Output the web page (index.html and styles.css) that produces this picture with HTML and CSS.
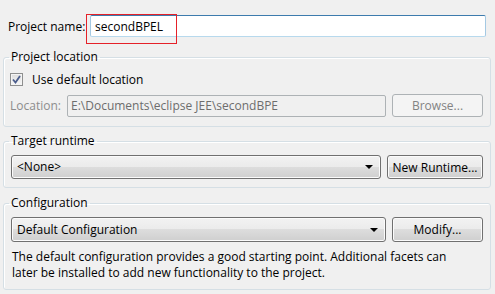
FILE: index.html
```html
<!doctype html>
<html>
  <head>
    <meta charset="utf-8">
    <link rel="stylesheet" href="styles.css">
  </head>
  <body>
    <div class="page">
      <div class="name-row">
        <label class="name-label" for="name">Project name:</label>
        <input id="name" class="name-input" type="text" value="secondBPEL">
        <span class="callout"></span>
      </div>

      <fieldset class="group group-location">
        <legend>Project location</legend>
        <label class="check-row">
          <span class="check">
            <svg width="9" height="9" viewBox="0 0 9 9"><path d="M1 4.5 L3.5 7.5 L8 1" fill="none" stroke="#4b5d8c" stroke-width="1.8"/></svg>
          </span>
          Use default location
        </label>
        <div class="row">
          <span class="loc-label">Location:</span>
          <span class="field field-disabled">E:\Documents\eclipse JEE\secondBPE</span>
          <button class="btn btn-small" disabled>Browse...</button>
        </div>
      </fieldset>

      <fieldset class="group group-runtime">
        <legend>Target runtime</legend>
        <div class="row">
          <span class="combo">&lt;None&gt;<span class="arrow"></span></span>
          <button class="btn btn-wide">New Runtime...</button>
        </div>
      </fieldset>

      <fieldset class="group group-config">
        <legend>Configuration</legend>
        <div class="row">
          <span class="combo combo-tall">Default Configuration<span class="arrow"></span></span>
          <button class="btn btn-small btn-tall">Modify...</button>
        </div>
        <p class="desc">The default configuration provides a good starting point. Additional facets can<br>later be installed to add new functionality to the project.</p>
      </fieldset>
    </div>
  </body>
</html>
```

FILE: styles.css
```css
body {
  margin: 0;
  background: #f0f0f0;
  font-family: "Open Sans", sans-serif;
  font-size: 12px;
  color: #000;
}
.page {
  padding-top: 15px;
}
.name-row {
  position: relative;
  display: flex;
  align-items: center;
  height: 22px;
}
.name-label {
  width: 82px;
  padding-left: 8px;
}
.name-input {
  box-sizing: border-box;
  width: 396px;
  height: 22px;
  margin: 0;
  padding: 0 0 0 4px;
  border: 1px solid;
  border-color: #3d7bad #a4c9e3 #b7d9ed #a4c9e3;
  border-radius: 2px;
  background: #fff;
  font-family: inherit;
  font-size: 12px;
  color: #000;
  outline: none;
}
.callout {
  position: absolute;
  left: 86px;
  top: -1px;
  width: 89px;
  height: 28px;
  border: 1px solid #e52129;
}
.group {
  margin: 12px 4px 0 3px;
  padding: 6px 7px 8px 7px;
  border: 1px solid #d5dfe5;
  border-radius: 3px;
  box-shadow: inset 1px 1px 0 #fff;
}
.group legend {
  padding: 0 2px;
  margin-left: -2px;
  line-height: 16px;
}
.group-location {
  padding-top: 6px;
  padding-bottom: 9px;
}
.group-runtime {
  margin-top: 6px;
}
.group-config {
  margin-top: 7px;
}
.check-row {
  display: flex;
  align-items: center;
  height: 16px;
  margin-left: -1px;
}
.check {
  box-sizing: border-box;
  display: flex;
  align-items: center;
  justify-content: center;
  width: 13px;
  height: 13px;
  margin-right: 9px;
  border: 1px solid #8e8f8f;
  background: linear-gradient(#dcdcdc, #f8f8f8);
  box-shadow: inset 0 0 0 1px #f4f4f4;
}
.row {
  display: flex;
  align-items: center;
  gap: 6px;
}
.group-location .row {
  margin-top: 7px;
}
.loc-label {
  width: 51px;
  margin-left: -1px;
  color: #8d8d8d;
}
.field {
  box-sizing: border-box;
  flex: 1;
  height: 22px;
  line-height: 20px;
  padding-left: 3px;
  border: 1px solid #adb2b5;
  border-radius: 2px;
  white-space: nowrap;
  overflow: hidden;
}
.field-disabled {
  color: #6d6d6d;
  background: #f0f0f0;
}
.btn {
  box-sizing: border-box;
  height: 24px;
  margin: 0;
  padding: 0;
  border: 1px solid #707070;
  border-radius: 3px;
  background: linear-gradient(#f2f2f2 0%, #ebebeb 50%, #dddddd 50%, #cfcfcf 100%);
  box-shadow: inset 0 0 0 1px #fbfbfb;
  font-family: inherit;
  font-size: 12px;
  color: #000;
}
.btn:disabled {
  height: 23px;
  border-color: #adb2b5;
  background: #f4f4f4;
  box-shadow: none;
  color: #838383;
}
.btn-small {
  width: 91px;
}
.btn-wide {
  width: 96px;
}
.btn-tall {
  height: 25px;
}
.combo {
  box-sizing: border-box;
  position: relative;
  flex: 1;
  height: 24px;
  line-height: 22px;
  padding-left: 5px;
  border: 1px solid #707070;
  border-radius: 3px;
  background: linear-gradient(#f2f2f2 0%, #ebebeb 50%, #dddddd 50%, #cfcfcf 100%);
  box-shadow: inset 0 0 0 1px #fbfbfb;
}
.combo-tall {
  height: 25px;
  line-height: 23px;
}
.arrow {
  position: absolute;
  right: 7px;
  top: 50%;
  margin-top: -2px;
  border-left: 4px solid transparent;
  border-right: 4px solid transparent;
  border-top: 4px solid #000;
}
.desc {
  margin: 7px 0 0 1px;
  line-height: 16px;
}
```
